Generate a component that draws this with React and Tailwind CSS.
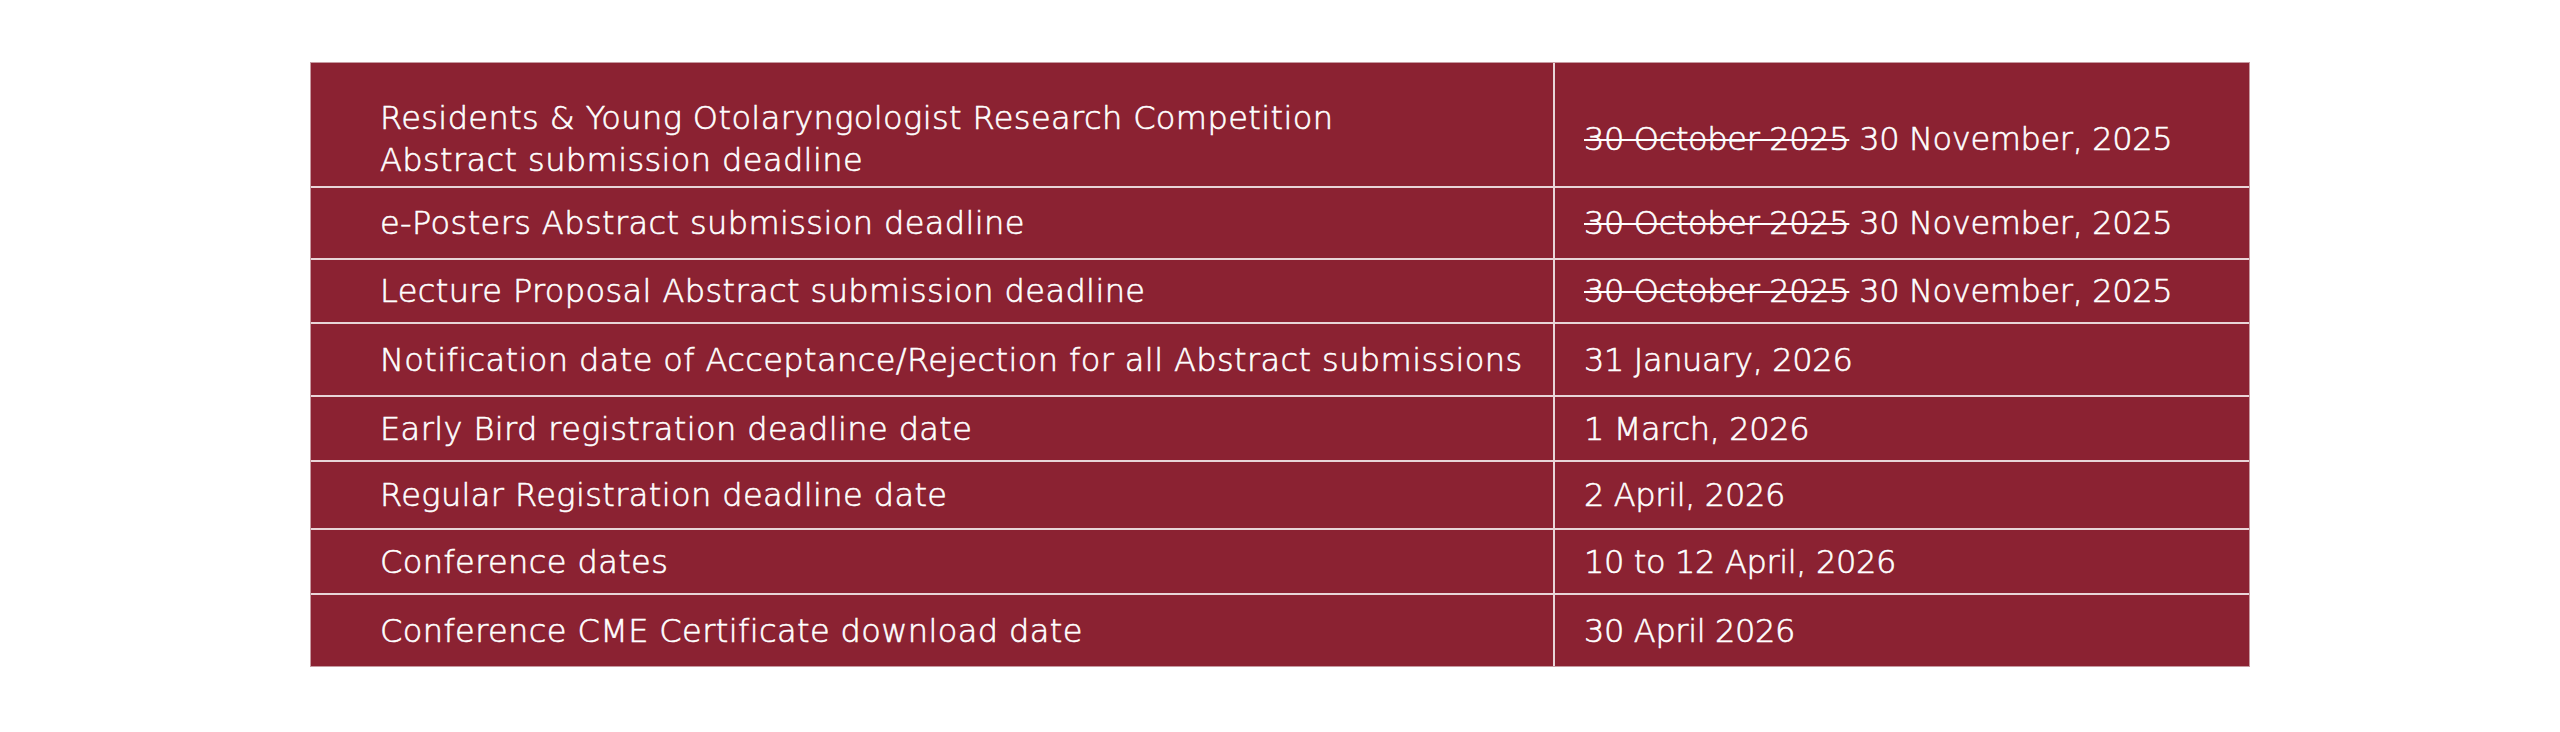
const rows = [
  {
    label: ['Residents & Young Otolaryngologist Research Competition', 'Abstract submission deadline'],
    old: '30 October 2025',
    date: '30 November, 2025',
    h: 'h-[123px] pt-[28px]',
  },
  { label: ['e-Posters Abstract submission deadline'], old: '30 October 2025', date: '30 November, 2025', h: 'h-[70px]' },
  { label: ['Lecture Proposal Abstract submission deadline'], old: '30 October 2025', date: '30 November, 2025', h: 'h-[62px]' },
  { label: ['Notification date of Acceptance/Rejection for all Abstract submissions'], date: '31 January, 2026', h: 'h-[71px]' },
  { label: ['Early Bird registration deadline date'], date: '1 March, 2026', h: 'h-[63px]' },
  { label: ['Regular Registration deadline date'], date: '2 April, 2026', h: 'h-[66px]' },
  { label: ['Conference dates'], date: '10 to 12 April, 2026', h: 'h-[63px]' },
  { label: ['Conference CME Certificate download date'], date: '30 April 2026', h: 'h-[71px]' },
];

function DateRow({ row, last }) {
  return (
    <div className={`grid grid-cols-[1242px_1fr] ${last ? '' : 'border-b-2 border-[#e9d5d8]'}`}>
      <div className={`flex flex-col justify-center pl-[69px] pr-4 leading-[42px] tracking-[0.4px] ${row.h}`}>
        {row.label.map((line) => (
          <span key={line}>{line}</span>
        ))}
      </div>
      <div className={`flex items-center border-l-2 border-[#e9d5d8] pl-[29px] tracking-[-0.35px] ${row.h}`}>
        {row.old ? <span className="line-through decoration-2">{row.old}</span> : null}
        {row.old ? <span>&nbsp;</span> : null}
        <span>{row.date}</span>
      </div>
    </div>
  );
}

export default function App() {
  return (
    <div className="min-h-[732px] bg-white pt-[62px]">
      <div
        className="mx-auto w-[1940px] border border-[#c79aa1] bg-[#8b2232] text-[32px] font-extralight text-white [-webkit-text-stroke:0.6px_white]"
        style={{ fontFamily: '"DejaVu Sans", sans-serif' }}
      >
        {rows.map((row, i) => (
          <DateRow key={i} row={row} last={i === rows.length - 1} />
        ))}
      </div>
    </div>
  );
}
